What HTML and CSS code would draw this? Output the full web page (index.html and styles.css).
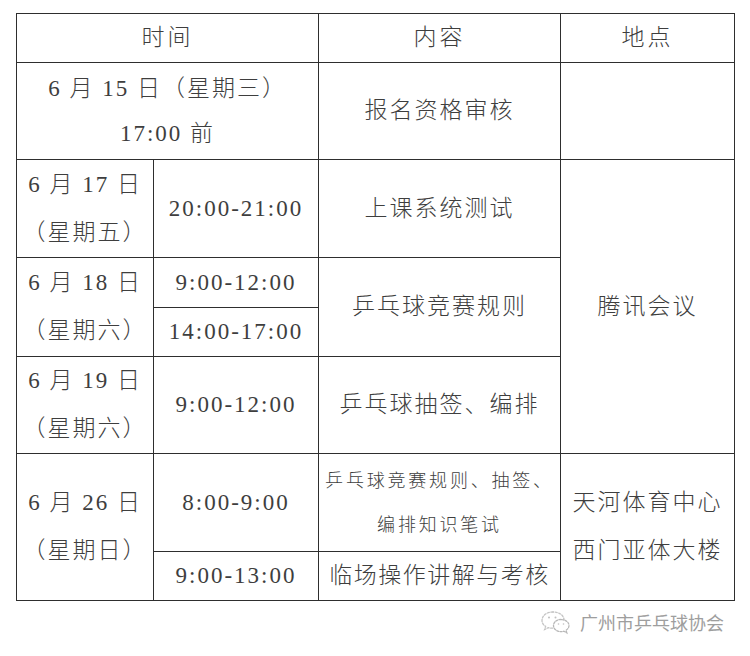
FILE: index.html
```html
<!DOCTYPE html>
<html lang="zh-CN">
<head>
<meta charset="utf-8">
<title>日程安排</title>
<link rel="stylesheet" href="styles.css">
</head>
<body>
<div class="page">
  <table class="schedule">
    <colgroup>
      <col class="c1"><col class="c2"><col class="c3"><col class="c4">
    </colgroup>
    <tr class="h49">
      <th colspan="2">时间</th>
      <th>内容</th>
      <th>地点</th>
    </tr>
    <tr class="h97">
      <td colspan="2" class="lh45">6 月 15 日（星期三）<br>17:00 前</td>
      <td>报名资格审核</td>
      <td></td>
    </tr>
    <tr class="h98">
      <td class="day">6 月 17 日<br>（星期五）</td>
      <td>20:00-21:00</td>
      <td>上课系统测试</td>
      <td rowspan="4">腾讯会议</td>
    </tr>
    <tr class="h50">
      <td rowspan="2" class="day">6 月 18 日<br>（星期六）</td>
      <td>9:00-12:00</td>
      <td rowspan="2">乒乓球竞赛规则</td>
    </tr>
    <tr class="h49">
      <td>14:00-17:00</td>
    </tr>
    <tr class="h97">
      <td class="day">6 月 19 日<br>（星期六）</td>
      <td>9:00-12:00</td>
      <td>乒乓球抽签、编排</td>
    </tr>
    <tr class="h98">
      <td rowspan="2" class="day">6 月 26 日<br>（星期日）</td>
      <td>8:00-9:00</td>
      <td class="small">乒乓球竞赛规则、抽签、<br>编排知识笔试</td>
      <td rowspan="2" class="day">天河体育中心<br>西门亚体大楼</td>
    </tr>
    <tr class="h49">
      <td>9:00-13:00</td>
      <td class="tight">临场操作讲解与考核</td>
    </tr>
  </table>
  <div class="footer">
    <svg class="wx" width="32" height="26" viewBox="0 0 32 26" aria-hidden="true">
      <path d="M13 3 C6 3 2 7 2 11.5 C2 14 3.4 16 5.6 17.4 L4.6 20.5 L8.4 18.6 C9.8 19 11.3 19.2 13 19.2" fill="none" stroke="#c4c4c4" stroke-width="1.3" stroke-dasharray="2 1.6" stroke-linecap="round"/>
      <path d="M24 11 C24 6.5 19.5 3 13 3" fill="none" stroke="#c4c4c4" stroke-width="1.3" stroke-dasharray="2 1.6" stroke-linecap="round"/>
      <path d="M21 10.5 C16.5 10.5 13.5 13.3 13.5 16.6 C13.5 20 16.8 22.6 21 22.6 C22 22.6 23 22.5 23.9 22.2 L26.8 23.8 L26 21.2 C27.9 20 29 18.4 29 16.6 C29 13.3 25.6 10.5 21 10.5 Z" fill="none" stroke="#b8b8b8" stroke-width="1.3" stroke-dasharray="2 1.4" stroke-linecap="round"/>
      <circle cx="9" cy="8.5" r="1" fill="#c0c0c0"/>
      <circle cx="15.5" cy="8.5" r="1" fill="#c0c0c0"/>
      <circle cx="18.5" cy="15" r="0.8" fill="#c0c0c0"/>
      <circle cx="23.5" cy="15" r="0.8" fill="#c0c0c0"/>
    </svg>
    <span class="brand">广州市乒乓球协会</span>
  </div>
</div>
</body>
</html>
```

FILE: styles.css
```css
html, body {
  margin: 0;
  padding: 0;
  background: #ffffff;
}

.page {
  width: 750px;
  height: 656px;
  padding: 13px 0 0 16px;
  box-sizing: border-box;
  font-family: "Liberation Serif", "Noto Sans CJK SC", serif;
  color: #3e3e3e;
}

.schedule {
  border-collapse: collapse;
  table-layout: fixed;
  width: 718px;
  font-size: 23px;
  font-weight: 300;
  letter-spacing: 2px;
}

.schedule col.c1 { width: 137px; }
.schedule col.c2 { width: 165px; }
.schedule col.c3 { width: 242px; }
.schedule col.c4 { width: 174px; }

.schedule th,
.schedule td {
  border: 1px solid #2e2e2e;
  padding: 0;
  text-align: center;
  vertical-align: middle;
  font-weight: 300;
  line-height: 30px;
  white-space: nowrap;
}

.schedule th {
  letter-spacing: 3px;
}

.h49 { height: 49px; }
.h50 { height: 50px; }
.h97 { height: 97px; }
.h98 { height: 98px; }

.schedule td.lh45 { line-height: 45px; }
.schedule td.day { line-height: 48px; }

.schedule td.small {
  font-size: 18px;
  line-height: 44px;
  letter-spacing: 2.8px;
}

.schedule td.tight {
  letter-spacing: 1.5px;
}

.footer {
  display: flex;
  justify-content: flex-end;
  align-items: center;
  gap: 8px;
  width: 718px;
  padding-top: 8px;
  padding-right: 10px;
  box-sizing: border-box;
}

.wx {
  display: block;
}

.brand {
  font-family: "Noto Sans CJK SC", "Liberation Sans", sans-serif;
  font-size: 18px;
  color: #8e8e8e;
  letter-spacing: 0;
  opacity: 0.85;
}
```
